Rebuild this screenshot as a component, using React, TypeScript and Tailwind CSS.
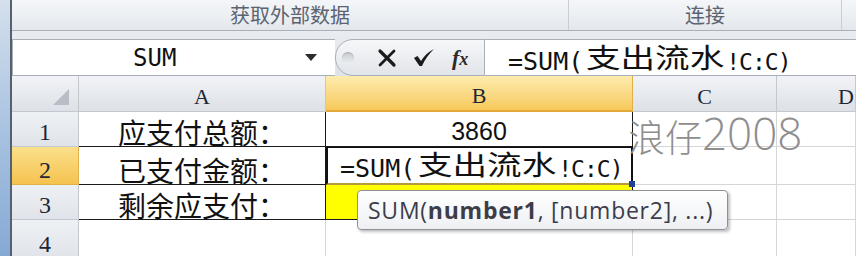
import React from "react";

const cjk = "font-['Noto_Sans_CJK_SC',sans-serif]";
const mono = "font-['DejaVu_Sans_Mono','Noto_Sans_CJK_SC',monospace]";
const serif = "font-['Liberation_Serif',serif]";

function FormulaText() {
  return (
    <span className="inline-flex items-end whitespace-nowrap text-[#111]">
      <span className={`${mono} text-[25px] leading-none`}>=SUM(</span>
      <span className="ml-[3px] inline-block w-[140px]">
        <span className={`${cjk} inline-block origin-left scale-x-[1.28] text-[27px] leading-none`}>支出流水</span>
      </span>
      <span className={`${mono} text-[23px] leading-none tracking-[-1px]`}>!C:C)</span>
    </span>
  );
}

function XIcon() {
  return (
    <svg width="20" height="20" viewBox="0 0 20 20">
      <path d="M3 3 C8 8 12 12 17 17" stroke="#1b1b1b" strokeWidth="3.2" strokeLinecap="round" fill="none" />
      <path d="M17 3 C12 8 8 12 3 17" stroke="#1b1b1b" strokeWidth="2.8" strokeLinecap="round" fill="none" />
    </svg>
  );
}

function CheckIcon() {
  return (
    <svg width="24" height="20" viewBox="0 0 24 20">
      <path d="M2 10 L5.5 8 L9 13 C12 8 16 4 22 1 C17.5 5.5 13 11 10 18 L7.5 18 Z" fill="#1b1b1b" />
    </svg>
  );
}

const headerCell = "flex items-end justify-center border-r border-b border-[#c3c8cf] bg-gradient-to-b from-[#f1f3f6] to-[#dde1e7] pb-[3px] text-[22px] leading-none text-[#1d2733]";
const rowHead = "flex items-end justify-center border-r border-b border-[#c3c8cf] bg-gradient-to-b from-[#eef1f4] to-[#e0e4ea] pb-[2px] text-[24px] leading-none text-[#1d2733]";
const blackCell = "flex items-end justify-center border-r border-b border-[#1a1a1a] bg-white";
const plainCell = "border-r border-b border-[#d6d6d6] bg-white";

export default function App() {
  return (
    <div className="flex h-[256px] w-[856px] overflow-hidden bg-white">
      <div className="w-[10px] bg-gradient-to-b from-[#d5e0ec] via-[#a9c3e1] to-[#86a9d4]" />
      <div className="w-[2px] bg-[#56616f]" />
      <div className="flex min-w-0 flex-1 flex-col">
        {/* ribbon */}
        <div className={`flex h-[33px] border-b border-[#a9b0b9] bg-gradient-to-b from-[#f4f6f9] to-[#e4e8ed] ${cjk} text-[20px] text-[#5c6370]`}>
          <div className="flex w-[557px] items-start justify-center border-r border-[#c9ced5]">获取外部数据</div>
          <div className="flex w-[273px] items-start justify-center border-r border-[#c9ced5]">连接</div>
          <div className="flex-1" />
        </div>

        {/* formula bar */}
        <div className="flex h-[53px] bg-gradient-to-b from-[#e9ecf0] to-[#dfe3e8] pt-[8px]">
          <div className="flex h-[37px] w-[323px] items-center border-y border-l border-[#a9b0b9] bg-white">
            <span className={`${mono} pl-[120px] text-[24px] leading-none text-[#111]`}>SUM</span>
            <span className="ml-auto mr-[18px] h-0 w-0 border-x-[6px] border-t-[7px] border-x-transparent border-t-[#2c2c2c]" />
          </div>
          <div className="flex h-[37px] w-[150px] items-center rounded-l-[18px] border border-[#a9b0b9] bg-gradient-to-b from-[#f6f7f9] to-[#e1e4e9]">
            <span className="ml-[6px] h-[12px] w-[12px] rounded-full bg-gradient-to-b from-[#c4c8ce] to-[#eef0f2] shadow-[inset_0_1px_1px_rgba(0,0,0,0.15)]" />
            <span className="ml-[23px] flex"><XIcon /></span>
            <span className="ml-[15px] flex"><CheckIcon /></span>
            <span className={`${serif} ml-[16px] text-[22px] font-bold italic leading-none text-[#2a2a2a]`}>
              f<span className="text-[18px]">x</span>
            </span>
          </div>
          <div className="flex h-[37px] flex-1 items-center border-y border-[#a9b0b9] bg-white pl-[23px] pt-[1px]">
            <FormulaText />
          </div>
        </div>

        {/* grid */}
        <div className="relative flex-1">
          <div className="grid h-full grid-cols-[67px_247px_307px_144px_1fr] grid-rows-[36px_35px_38px_35px_1fr]">
            <div className="relative border-r border-b border-[#c3c8cf] bg-gradient-to-b from-[#f1f3f6] to-[#dde1e7]">
              <svg className="absolute right-[9px] bottom-[6px]" width="16" height="16" viewBox="0 0 16 16">
                <path d="M16 0 L16 16 L0 16 Z" fill="#b9bec6" />
              </svg>
            </div>
            <div className={`${headerCell} ${serif}`}>A</div>
            <div className={`${serif} flex items-end justify-center border-r border-b-2 border-r-[#e0b04a] border-b-[#e3a93a] bg-gradient-to-b from-[#fdecae] to-[#f7c95a] pb-[3px] text-[22px] leading-none text-[#1d2733]`}>B</div>
            <div className={`${headerCell} ${serif}`}>C</div>
            <div className={`${headerCell} ${serif} justify-end pr-[1px]`}>D</div>

            <div className={`${rowHead} ${serif}`}>1</div>
            <div className={`${blackCell} ${cjk} text-[28px] leading-none text-[#111]`}>应支付总额：</div>
            <div className={`${blackCell} font-['Liberation_Sans',sans-serif] pb-[2px] text-[25px] leading-none text-[#111]`}>3860</div>
            <div className={plainCell} />
            <div className={plainCell} />

            <div className={`${serif} flex items-end justify-center border-r border-b border-[#e0b04a] bg-gradient-to-b from-[#fbe08a] to-[#f5c24e] pb-[2px] text-[24px] leading-none text-[#1d2733]`}>2</div>
            <div className={`${blackCell} ${cjk} text-[28px] leading-none text-[#111]`}>已支付金额：</div>
            <div className="relative flex items-end border-x-2 border-t-[1px] border-b-2 border-x-[#111] border-t-[#111] border-b-[#b59b3c] bg-white pb-[2px] pl-[12px]">
              <FormulaText />
              <span className="absolute -right-[4px] -bottom-[4px] h-[6px] w-[6px] bg-[#1f3f9c]" />
            </div>
            <div className={plainCell} />
            <div className={plainCell} />

            <div className={`${rowHead} ${serif}`}>3</div>
            <div className={`${blackCell} ${cjk} text-[28px] leading-none text-[#111]`}>剩余应支付：</div>
            <div className="border-r border-b border-[#1a1a1a] bg-[#ffff00]" />
            <div className={plainCell} />
            <div className={plainCell} />

            <div className={`${rowHead} ${serif} items-start pt-[12px]`}>4</div>
            <div className={plainCell} />
            <div className={plainCell} />
            <div className={plainCell} />
            <div className={plainCell} />
          </div>

          {/* watermark */}
          <div className="pointer-events-none absolute left-[616px] top-[35px] flex items-end whitespace-nowrap leading-none text-[#8e8e8e]">
            <span className={`${cjk} text-[37px] font-light`}>浪仔</span>
            <span className="font-['Open_Sans',sans-serif] text-[44px] font-light">2008</span>
          </div>

          {/* tooltip */}
          <div className="absolute left-[345px] top-[114px] flex h-[40px] w-[371px] items-center rounded-[4px] border border-[#8e9096] bg-gradient-to-b from-[#ffffff] to-[#eef0f3] pl-[10px] font-['Open_Sans',sans-serif] text-[23px] leading-none tracking-[0.75px] text-[#3d3d4a] shadow-[2px_2px_3px_rgba(0,0,0,0.25)]">
            SUM(<span className="font-bold">number1</span>, [number2], ...)
          </div>
        </div>
      </div>
    </div>
  );
}
